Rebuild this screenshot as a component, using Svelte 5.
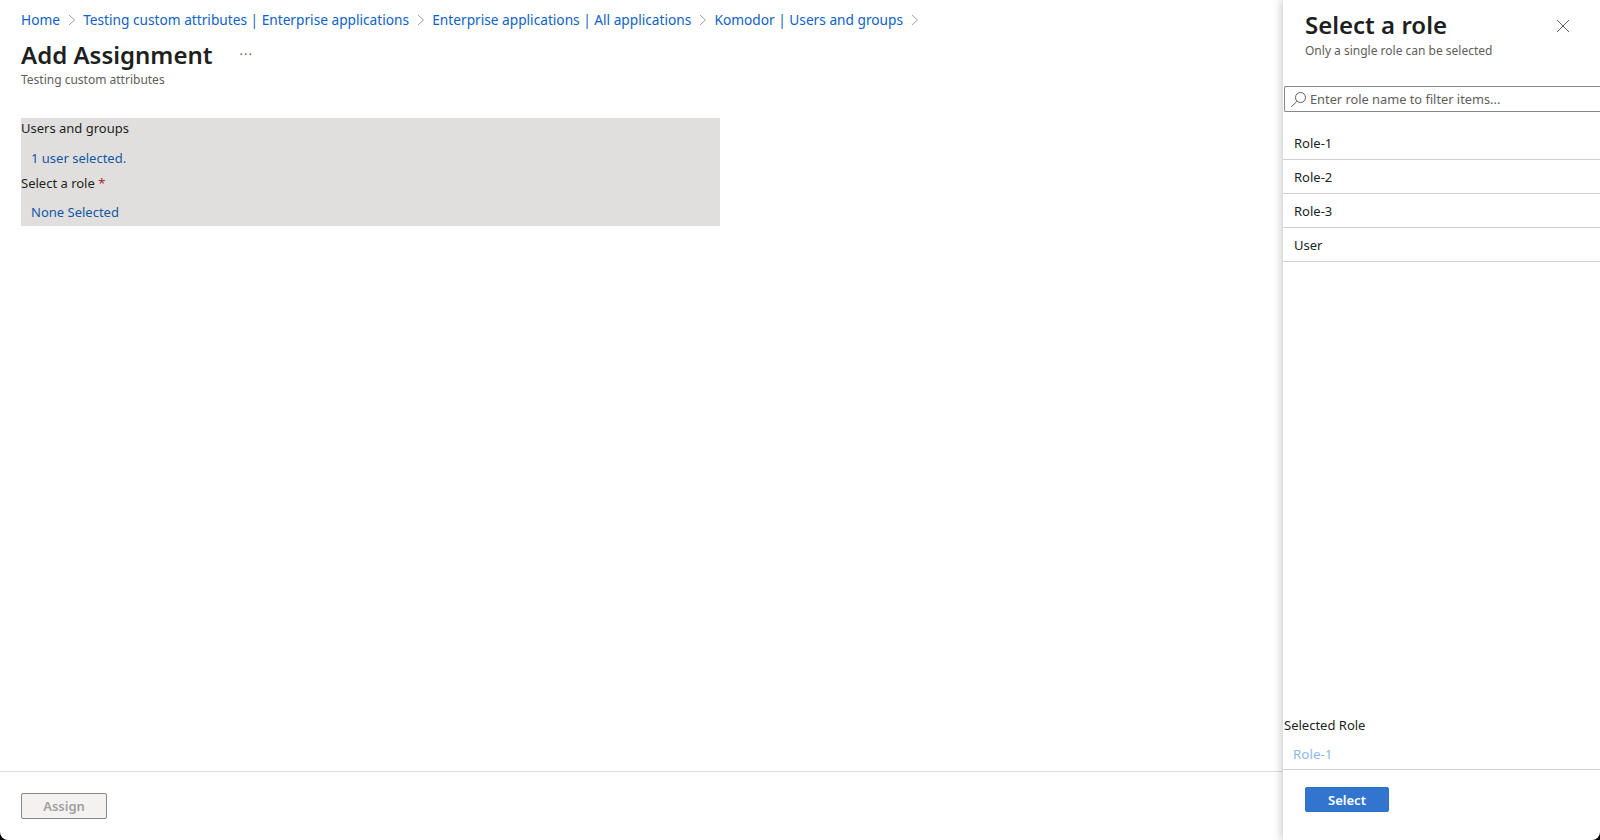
<script>
  const crumbs = [
    'Home',
    'Testing custom attributes | Enterprise applications',
    'Enterprise applications | All applications',
    'Komodor | Users and groups'
  ];
  const roles = ['Role-1', 'Role-2', 'Role-3', 'User'];
</script>

<div class="page">
  <div class="main">
    <div class="content">
      <nav class="breadcrumb">
        {#each crumbs as crumb}
          <a href="#top">{crumb}</a>
          <svg class="chevron" width="8" height="12" viewBox="0 0 8 12">
            <path d="M1 1l5.5 5L1 11" fill="none" stroke="#a19f9d" stroke-width="1" />
          </svg>
        {/each}
      </nav>

      <div class="title-row">
        <h1>Add Assignment</h1>
        <span class="more">···</span>
      </div>
      <div class="subtitle">Testing custom attributes</div>

      <div class="summary">
        <div class="label">Users and groups</div>
        <div class="value">1 user selected.</div>
        <div class="label second">Select a role <span class="req">*</span></div>
        <div class="value">None Selected</div>
      </div>
    </div>

    <div class="footer">
      <button class="assign" disabled>Assign</button>
    </div>
  </div>

  <aside class="panel">
    <div class="panel-head">
      <div>
        <h2>Select a role</h2>
        <div class="panel-sub">Only a single role can be selected</div>
      </div>
      <svg class="close" width="14" height="14" viewBox="0 0 14 14">
        <path d="M1 1l12 12M13 1L1 13" fill="none" stroke="#605e5c" stroke-width="1" />
      </svg>
    </div>

    <div class="search">
      <svg width="17" height="17" viewBox="0 0 17 17">
        <circle cx="10.5" cy="6.5" r="5" fill="none" stroke="#605e5c" stroke-width="1" />
        <path d="M7 10.2L1.2 16" fill="none" stroke="#605e5c" stroke-width="1" />
      </svg>
      <span>Enter role name to filter items...</span>
    </div>

    <ul class="roles">
      {#each roles as role}
        <li>{role}</li>
      {/each}
    </ul>

    <div class="selected">
      <div class="selected-label">Selected Role</div>
      <div class="selected-value">Role-1</div>
    </div>

    <div class="panel-foot">
      <button class="select">Select</button>
    </div>
  </aside>

  <div class="corner left"></div>
  <div class="corner right"></div>
</div>

<style>
  :global(body) {
    margin: 0;
    background: #fff;
  }

  .page {
    position: relative;
    display: flex;
    height: 840px;
    overflow: hidden;
    font-family: "Noto Sans", "Open Sans", sans-serif;
    font-size: 13px;
    color: #201f1e;
  }

  .main {
    flex: 1;
    display: flex;
    flex-direction: column;
    min-width: 0;
  }

  .content {
    flex: 1;
    padding: 10px 0 0 21px;
  }

  .breadcrumb {
    display: flex;
    align-items: center;
    height: 19px;
    font-size: 13.7px;
  }

  .breadcrumb a {
    color: #0f62c9;
    text-decoration: none;
  }

  .chevron {
    margin: 0 7.6px;
  }

  .title-row {
    display: flex;
    align-items: center;
    margin-top: 7px;
    height: 36px;
  }

  h1 {
    margin: 0;
    font-size: 24px;
    font-weight: 600;
    color: #201f1e;
  }

  .more {
    margin-left: 27px;
    color: #605e5c;
    font-size: 13px;
    letter-spacing: 1px;
  }

  .subtitle {
    font-size: 12px;
    line-height: 16px;
    color: #605e5c;
  }

  .summary {
    width: 699px;
    height: 108px;
    margin-top: 30px;
    background: #e0dfdd;
  }

  .label {
    height: 21px;
    line-height: 21px;
    color: #201f1e;
  }

  .second {
    height: 20px;
    line-height: 20px;
  }

  .req {
    color: #a4262c;
  }

  .value {
    height: 29px;
    line-height: 28px;
    padding: 5px 0 0 10px;
    color: #1257a8;
  }

  .footer {
    height: 69px;
    box-sizing: border-box;
    border-top: 1px solid #e1dfdd;
    padding: 21px 0 0 21px;
  }

  .assign {
    display: block;
    width: 86px;
    height: 26px;
    padding: 0;
    border: 1px solid #8a8886;
    border-radius: 2px;
    background: #f3f2f1;
    color: #a19f9d;
    font: 600 13px "Noto Sans", "Open Sans", sans-serif;
  }

  .panel {
    position: relative;
    width: 317px;
    display: flex;
    flex-direction: column;
    background: #fff;
    box-shadow: -2px 0 8px rgba(0, 0, 0, 0.2);
  }

  .panel-head {
    display: flex;
    justify-content: space-between;
    height: 86px;
    padding: 8px 30px 0 22px;
    box-sizing: border-box;
  }

  h2 {
    margin: 0 0 2px;
    font-size: 24px;
    line-height: 33px;
    font-weight: 600;
  }

  .panel-sub {
    font-size: 12px;
    line-height: 16px;
    color: #605e5c;
  }

  .close {
    margin-top: 11px;
  }

  .search {
    display: flex;
    align-items: center;
    gap: 3px;
    height: 26px;
    box-sizing: border-box;
    margin-left: 1px;
    padding-left: 5px;
    border: 1px solid #8a8886;
    border-right: none;
    border-radius: 2px 0 0 2px;
    font-size: 12.8px;
    color: #605e5c;
  }

  .roles {
    flex: 1;
    list-style: none;
    margin: 14px 0 0;
    padding: 0;
  }

  .roles li {
    height: 34px;
    line-height: 35px;
    box-sizing: border-box;
    padding-left: 11px;
    border-bottom: 1px solid #d2d0ce;
  }

  .selected {
    border-bottom: 1px solid #d2d0ce;
  }

  .selected-label {
    height: 21px;
    line-height: 21px;
    padding-left: 1px;
  }

  .selected-value {
    height: 33px;
    line-height: 37px;
    padding-left: 10px;
    font-size: 13.4px;
    color: #8fb8ea;
  }

  .panel-foot {
    height: 70px;
    padding: 17px 0 0 22px;
    box-sizing: border-box;
  }

  .select {
    display: block;
    width: 84px;
    height: 25px;
    padding: 0;
    border: 1px solid #2b6fc9;
    border-radius: 2px;
    background: #3275cf;
    color: #fff;
    font: 600 13px "Noto Sans", "Open Sans", sans-serif;
  }

  .corner {
    position: absolute;
    bottom: 0;
    width: 8px;
    height: 8px;
    background: #000;
  }

  .corner.left {
    left: 0;
    clip-path: path("M0 0A8 8 0 0 0 8 8H0Z");
  }

  .corner.right {
    right: 0;
    clip-path: path("M8 0A8 8 0 0 1 0 8H8Z");
  }
</style>
